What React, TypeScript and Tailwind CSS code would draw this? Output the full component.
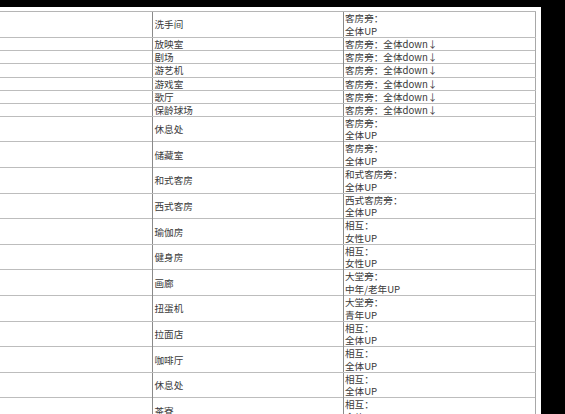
import React from 'react';

type Row = { place: string; note: string[] };

const downNote = ['客房旁：全体down↓'];

const rows: Row[] = [
  { place: '洗手间', note: ['客房旁：', '全体UP'] },
  { place: '放映室', note: downNote },
  { place: '剧场', note: downNote },
  { place: '游艺机', note: downNote },
  { place: '游戏室', note: downNote },
  { place: '歌厅', note: downNote },
  { place: '保龄球场', note: downNote },
  { place: '休息处', note: ['客房旁：', '全体UP'] },
  { place: '储藏室', note: ['客房旁：', '全体UP'] },
  { place: '和式客房', note: ['和式客房旁：', '全体UP'] },
  { place: '西式客房', note: ['西式客房旁：', '全体UP'] },
  { place: '瑜伽房', note: ['相互：', '女性UP'] },
  { place: '健身房', note: ['相互：', '女性UP'] },
  { place: '画廊', note: ['大堂旁：', '中年/老年UP'] },
  { place: '扭蛋机', note: ['大堂旁：', '青年UP'] },
  { place: '拉面店', note: ['相互：', '全体UP'] },
  { place: '咖啡厅', note: ['相互：', '全体UP'] },
  { place: '休息处', note: ['相互：', '全体UP'] },
  { place: '茶寮', note: ['相互：', '全体UP'] },
];

function TableRow({ row, first }: { row: Row; first: boolean }) {
  const tall = row.note.length > 1;
  const height = tall ? (first ? 'h-[26.3px]' : 'h-[25.6px]') : 'h-[13.1px]';
  return (
    <div className={`grid grid-cols-[153px_191px_192px] border-b border-[#bdbdbd] ${height}`}>
      <div className="border-r border-[#8a8a8a]" />
      <div className="flex items-center border-r border-[#8a8a8a] pl-[1.5px]">
        <span>{row.place}</span>
      </div>
      <div className="flex flex-col pl-[1px] border-r border-[#a8a8a8]">
        {row.note.map((line, i) => (
          <span key={i} className="whitespace-nowrap">
            {line}
          </span>
        ))}
      </div>
    </div>
  );
}

export default function App() {
  return (
    <div className="h-[414px] w-[565px] overflow-hidden bg-black pt-[7px]">
      <div
        className="h-[407px] w-[541px] overflow-hidden bg-white pt-[4px] text-[9.6px] leading-[12.6px] text-[#3a3a3a]"
        style={{ fontFamily: '"Noto Sans CJK SC", "Noto Sans", sans-serif' }}
      >
        <div className="w-[536px] border-t border-[#b5b5b5]">
          {rows.map((row, i) => (
            <TableRow key={i} row={row} first={i === 0} />
          ))}
        </div>
      </div>
    </div>
  );
}
